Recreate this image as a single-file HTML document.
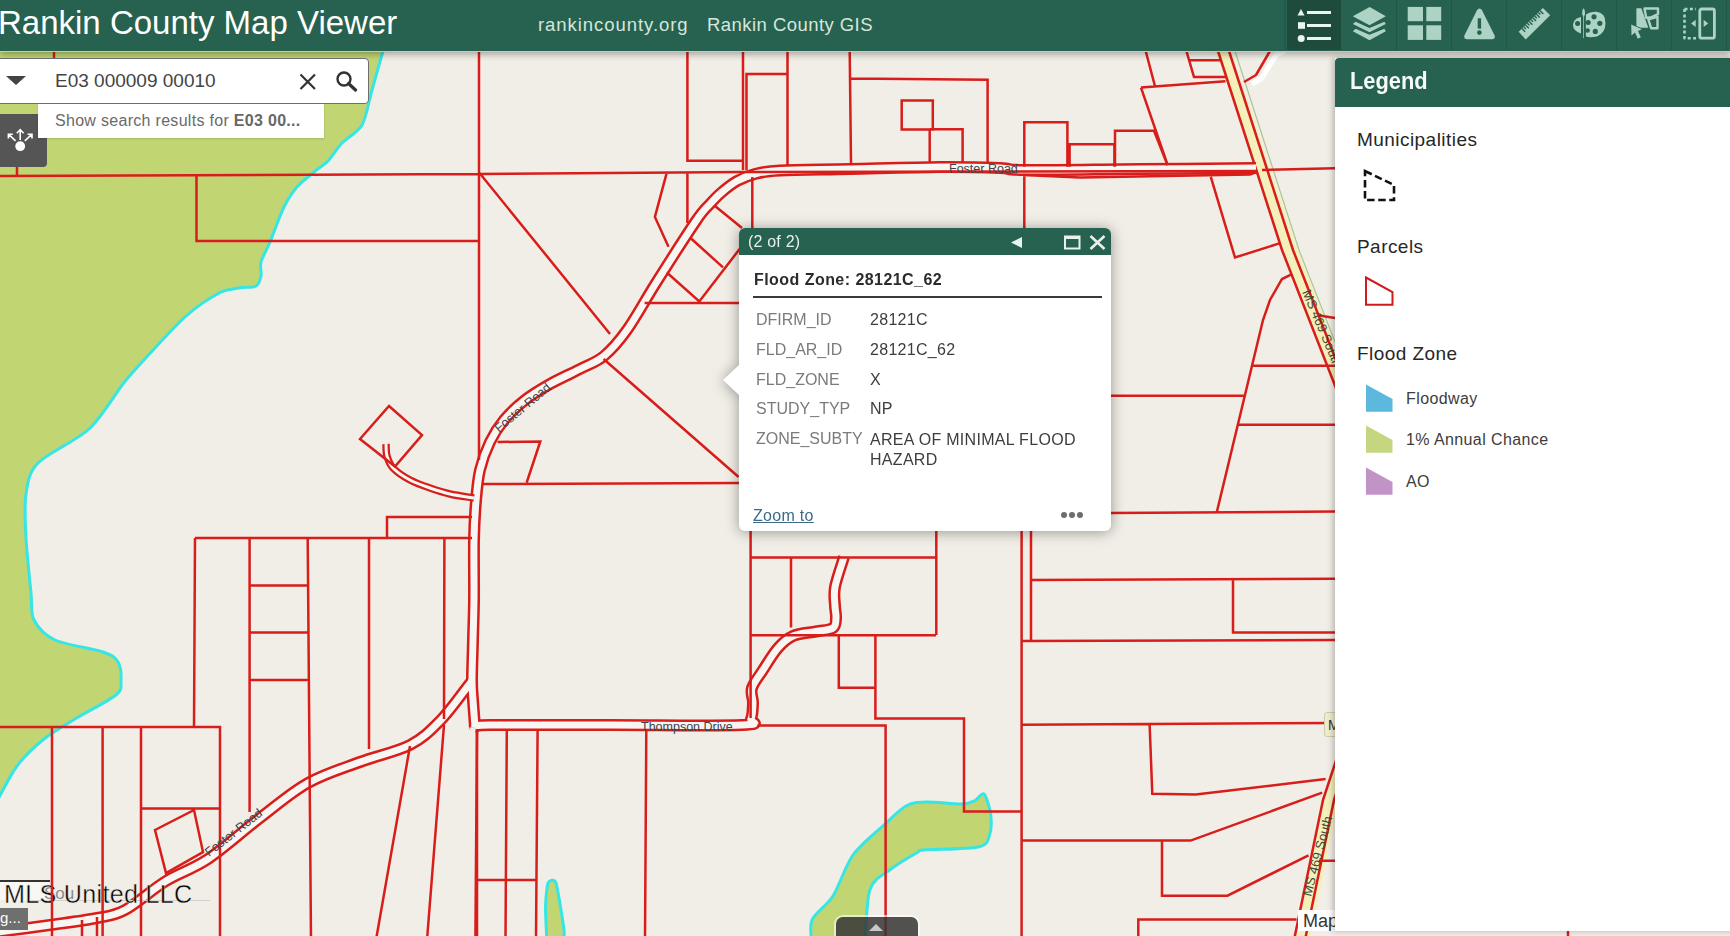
<!DOCTYPE html>
<html><head><meta charset="utf-8">
<style>
*{margin:0;padding:0;box-sizing:border-box}
html,body{width:1730px;height:936px;overflow:hidden;background:#F1EEE7;font-family:"Liberation Sans",sans-serif;position:relative}
#map{position:absolute;left:0;top:0;width:1730px;height:936px}
#hdr{position:absolute;left:0;top:0;width:1730px;height:52px;background:#26624F;border-bottom:1px solid #b9cfc5;box-shadow:0 3px 6px rgba(0,0,0,.28)}
#title{position:absolute;left:-2px;top:4px;font-size:33px;color:#fff;white-space:nowrap;letter-spacing:0}
.lnk{position:absolute;top:14px;font-size:18.5px;color:#d6e6dd;white-space:nowrap}
.tb{position:absolute;top:0;width:55px;height:50px;border-left:1px solid #215847}
.tb svg{position:absolute;left:11px;top:7px}
#legend{position:absolute;left:1335px;top:58px;width:400px;height:873px;background:#fff;box-shadow:-2px 0 6px rgba(0,0,0,.25)}
#lhd{position:absolute;left:0;top:0;width:100%;height:49px;background:#26624F;border-top-left-radius:4px}
#lhd span{position:absolute;left:15px;top:10px;font-size:23.5px;font-weight:bold;color:#f4fbf8;letter-spacing:0;transform:scaleX(0.93);transform-origin:0 0}
.lh{position:absolute;left:22px;font-size:19px;letter-spacing:0.45px;color:#262626;white-space:nowrap}
.li{position:absolute;left:71px;margin-top:1px;font-size:16px;letter-spacing:0.4px;color:#3c3c3c;white-space:nowrap}
#search{position:absolute;left:-1px;top:58px;width:370px;height:46px;background:#fff;border:1px solid #6e6e6e;border-radius:0 4px 4px 0}
#sugg{position:absolute;left:38px;top:104px;width:286px;height:34px;background:#fff;box-shadow:0 1px 2px rgba(0,0,0,.15)}
#sugg span{position:absolute;left:17px;top:8px;font-size:16px;color:#6a6a6a;white-space:nowrap;letter-spacing:0.3px}
#navbtn{position:absolute;left:0;top:114px;width:47px;height:53px;background:#555;border-radius:0 0 4px 0}
#popup{position:absolute;left:739px;top:228px;width:372px;height:303px;background:#fff;border-radius:6px;filter:drop-shadow(0 1px 7px rgba(0,0,0,.38))}
#phd{position:absolute;left:0;top:0;width:100%;height:27px;background:#26624F;border-radius:6px 6px 0 0}
#phd span{position:absolute;left:9px;top:5px;letter-spacing:0.2px;font-size:16px;color:#e8f1ec}
#ptitle{position:absolute;left:15px;top:43px;letter-spacing:0.45px;font-size:16px;font-weight:bold;color:#2b2b2b;white-space:nowrap}
#pline{position:absolute;left:14px;top:68px;width:349px;height:2px;background:#3a3a3a}
.pk{position:absolute;left:17px;margin-top:1px;font-size:16px;color:#7b7b7b;white-space:nowrap}
.pv{position:absolute;left:131px;margin-top:1px;letter-spacing:0.3px;font-size:16px;color:#3d3d3d;white-space:nowrap}
#zoomto{position:absolute;left:14px;top:279px;letter-spacing:0.3px;font-size:16px;color:#3c6a88;text-decoration:underline}
</style></head><body>
<svg id="map" width="1730" height="936" viewBox="0 0 1730 936">
<!--MAP-->
<g fill="#C1D573" stroke="none">
<path d="M386.0 40.0 C385.6 41.6 385.1 43.5 383.0 51.0 C380.9 58.5 375.1 78.9 372.0 90.0 C368.9 101.1 366.5 117.0 362.0 125.0 C357.5 132.9 347.1 137.6 342.0 143.0 C336.9 148.4 332.2 156.7 328.0 161.0 C323.8 165.3 318.6 168.1 314.0 172.0 C309.4 175.9 301.5 181.8 297.0 187.0 C292.5 192.2 288.1 198.8 284.0 207.0 C279.9 215.2 273.4 233.8 270.0 242.0 C266.6 250.2 262.4 256.9 261.0 262.0 C259.6 267.1 261.8 272.4 261.0 276.0 C260.2 279.6 259.3 284.2 256.0 286.0 C252.7 287.8 244.6 286.9 239.0 288.0 C233.4 289.1 227.1 288.6 219.0 293.0 C210.9 297.4 196.2 306.9 185.0 317.0 C173.8 327.1 153.3 349.9 144.0 360.0 C134.7 370.1 131.2 373.6 123.0 384.0 C114.8 394.4 101.8 417.1 89.0 429.0 C76.2 440.9 47.5 453.2 38.0 463.0 C28.5 472.8 27.8 482.8 26.0 494.0 C24.2 505.2 25.2 523.1 26.0 538.0 C26.8 552.9 29.8 580.7 31.0 593.0 C32.2 605.3 30.4 613.0 34.0 620.0 C37.6 627.0 44.6 635.2 55.0 640.0 C65.3 644.8 93.5 648.7 103.0 652.0 C112.5 655.3 115.3 657.6 118.0 662.0 C120.7 666.4 121.3 676.0 121.0 681.0 C120.7 686.0 122.9 689.3 116.0 695.0 C109.1 700.7 85.8 712.4 75.0 719.0 C64.2 725.6 52.7 732.0 44.0 739.0 C35.3 746.0 24.4 756.1 17.0 766.0 C9.7 775.9 -1.7 799.1 -5.0 805.0 L-5 40 Z"/>
<path d="M547.0 945.0 C546.9 941.2 545.4 913.2 545.5 907.0 C545.6 900.8 547.0 885.4 548.0 883.0 C549.0 880.6 554.4 878.3 556.0 883.0 C557.6 887.7 563.3 923.8 564.0 930.0 C564.7 936.2 563.1 943.5 563.0 945.0 Z"/>
<path d="M812.0 945.0 C812.0 941.2 808.9 927.4 812.0 920.0 C815.1 912.6 826.9 905.8 833.0 896.0 C839.1 886.2 845.4 865.6 853.0 855.0 C860.6 844.4 876.0 832.4 884.0 825.0 C892.0 817.6 899.7 809.5 906.0 806.0 C912.3 802.5 917.7 802.3 926.0 802.0 C934.3 801.7 954.1 804.2 961.5 804.0 C968.9 803.8 971.6 802.1 975.0 800.6 C978.4 799.1 981.7 792.0 984.0 794.0 C986.3 796.0 989.8 807.9 990.6 814.0 C991.4 820.1 991.4 830.0 989.6 835.0 C987.8 840.0 988.4 844.8 978.6 847.0 C968.8 849.2 933.1 849.2 924.0 850.0 C914.9 850.8 923.0 849.1 918.0 852.0 C913.0 854.9 898.2 863.4 891.0 869.0 C883.8 874.6 873.9 878.1 870.0 889.5 C866.1 900.9 865.8 936.7 865.0 945.0 Z"/>
</g>
<g fill="none" stroke="#36E6E4" stroke-width="3" stroke-linejoin="round">
<path d="M386.0 40.0 C385.6 41.6 385.1 43.5 383.0 51.0 C380.9 58.5 375.1 78.9 372.0 90.0 C368.9 101.1 366.5 117.0 362.0 125.0 C357.5 132.9 347.1 137.6 342.0 143.0 C336.9 148.4 332.2 156.7 328.0 161.0 C323.8 165.3 318.6 168.1 314.0 172.0 C309.4 175.9 301.5 181.8 297.0 187.0 C292.5 192.2 288.1 198.8 284.0 207.0 C279.9 215.2 273.4 233.8 270.0 242.0 C266.6 250.2 262.4 256.9 261.0 262.0 C259.6 267.1 261.8 272.4 261.0 276.0 C260.2 279.6 259.3 284.2 256.0 286.0 C252.7 287.8 244.6 286.9 239.0 288.0 C233.4 289.1 227.1 288.6 219.0 293.0 C210.9 297.4 196.2 306.9 185.0 317.0 C173.8 327.1 153.3 349.9 144.0 360.0 C134.7 370.1 131.2 373.6 123.0 384.0 C114.8 394.4 101.8 417.1 89.0 429.0 C76.2 440.9 47.5 453.2 38.0 463.0 C28.5 472.8 27.8 482.8 26.0 494.0 C24.2 505.2 25.2 523.1 26.0 538.0 C26.8 552.9 29.8 580.7 31.0 593.0 C32.2 605.3 30.4 613.0 34.0 620.0 C37.6 627.0 44.6 635.2 55.0 640.0 C65.3 644.8 93.5 648.7 103.0 652.0 C112.5 655.3 115.3 657.6 118.0 662.0 C120.7 666.4 121.3 676.0 121.0 681.0 C120.7 686.0 122.9 689.3 116.0 695.0 C109.1 700.7 85.8 712.4 75.0 719.0 C64.2 725.6 52.7 732.0 44.0 739.0 C35.3 746.0 24.4 756.1 17.0 766.0 C9.7 775.9 -1.7 799.1 -5.0 805.0"/>
<path d="M547.0 945.0 C546.9 941.2 545.4 913.2 545.5 907.0 C545.6 900.8 547.0 885.4 548.0 883.0 C549.0 880.6 554.4 878.3 556.0 883.0 C557.6 887.7 563.3 923.8 564.0 930.0 C564.7 936.2 563.1 943.5 563.0 945.0"/>
<path d="M812.0 945.0 C812.0 941.2 808.9 927.4 812.0 920.0 C815.1 912.6 826.9 905.8 833.0 896.0 C839.1 886.2 845.4 865.6 853.0 855.0 C860.6 844.4 876.0 832.4 884.0 825.0 C892.0 817.6 899.7 809.5 906.0 806.0 C912.3 802.5 917.7 802.3 926.0 802.0 C934.3 801.7 954.1 804.2 961.5 804.0 C968.9 803.8 971.6 802.1 975.0 800.6 C978.4 799.1 981.7 792.0 984.0 794.0 C986.3 796.0 989.8 807.9 990.6 814.0 C991.4 820.1 991.4 830.0 989.6 835.0 C987.8 840.0 988.4 844.8 978.6 847.0 C968.8 849.2 933.1 849.2 924.0 850.0 C914.9 850.8 923.0 849.1 918.0 852.0 C913.0 854.9 898.2 863.4 891.0 869.0 C883.8 874.6 873.9 878.1 870.0 889.5 C866.1 900.9 865.8 936.7 865.0 945.0"/>
</g>
<!-- highway -->
<g fill="none" stroke-linejoin="round">
<path d="M1212 30 L1226 59 L1290 250 L1342 383 L1370 450" stroke="#F3F0BC" stroke-width="14"/>
<path d="M1235 51 L1299 250 L1348 375 L1375 450" stroke="#a8c890" stroke-width="1.2"/>
<path d="M1211 30 L1218 51 L1282 250 L1334 383 L1360 450" stroke="#D81D1A" stroke-width="2.5"/>
<path d="M1222 30 L1229 51 L1293 250 L1345 383 L1371 450" stroke="#D81D1A" stroke-width="2.5"/>
<path d="M1364 700 L1331 800 L1301 945" stroke="#F3F0BC" stroke-width="15"/>
<path d="M1356 700 L1323 800 L1293 945" stroke="#D81D1A" stroke-width="2.5"/>
<path d="M1367 700 L1334 800 L1304 945" stroke="#D81D1A" stroke-width="2.5"/>
</g>
<!-- roads -->
<g fill="none" stroke-linejoin="round" stroke-linecap="butt">
<g stroke="#D81D1A" stroke-width="12">
<path d="M475.0 727.0 C474.7 722.5 473.5 707.8 473.0 700.0 C472.5 692.2 472.0 690.0 472.0 680.0 C472.0 670.0 472.7 653.3 473.0 640.0 C473.3 626.7 473.8 616.7 474.0 600.0 C474.2 583.3 473.7 556.5 474.0 540.0 C474.3 523.5 475.0 512.7 476.0 501.0 C477.0 489.3 477.7 479.8 480.0 470.0 C482.3 460.2 486.0 450.3 490.0 442.0 C494.0 433.7 498.2 427.0 504.0 420.0 C509.8 413.0 517.3 406.0 525.0 400.0 C532.7 394.0 540.8 389.2 550.0 384.0 C559.2 378.8 571.0 373.7 580.0 369.0 C589.0 364.3 596.2 362.5 604.0 356.0 C611.8 349.5 618.3 342.2 627.0 330.0 C635.7 317.8 644.5 301.2 656.0 283.0 C667.5 264.8 687.0 234.2 696.0 221.0 C705.0 207.8 705.7 208.8 710.0 204.0 C714.3 199.2 717.5 195.8 722.0 192.0 C726.5 188.2 731.5 184.0 737.0 181.0 C742.5 178.0 747.8 175.8 755.0 174.0 C762.2 172.2 764.2 171.3 780.0 170.5 C795.8 169.7 823.3 169.6 850.0 169.0 C876.7 168.4 915.0 167.2 940.0 167.0 C965.0 166.8 985.8 167.5 1000.0 168.0 C1014.2 168.5 1001.7 169.8 1025.0 170.0 C1048.3 170.2 1101.5 169.3 1140.0 169.0 C1178.5 168.7 1236.7 168.2 1256.0 168.0"/>
<path d="M-10.0 933.0 C0.0 931.7 32.2 927.5 50.0 925.0 C67.8 922.5 84.5 920.5 97.0 918.0 C109.5 915.5 113.5 916.2 125.0 910.0 C136.5 903.8 152.2 889.5 166.0 881.0 C179.8 872.5 192.3 869.5 208.0 859.0 C223.7 848.5 243.3 830.7 260.0 818.0 C276.7 805.3 291.3 792.3 308.0 783.0 C324.7 773.7 343.0 768.3 360.0 762.0 C377.0 755.7 396.7 751.8 410.0 745.0 C423.3 738.2 430.3 730.8 440.0 721.0 C449.7 711.2 462.7 692.8 468.0 686.0 C473.3 679.2 471.3 681.0 472.0 680.0"/>
<path d="M475.0 727.0 C477.5 726.7 467.5 725.3 490.0 725.0 C512.5 724.7 568.0 725.0 610.0 725.0 C652.0 725.0 718.5 726.0 742.0 725.0 C765.5 724.0 749.2 722.7 751.0 719.0 C752.8 715.3 752.8 708.2 753.0 703.0 C753.2 697.8 750.3 693.5 752.0 688.0 C753.7 682.5 758.7 676.7 763.0 670.0 C767.3 663.3 773.0 653.7 778.0 648.0 C783.0 642.3 786.7 638.8 793.0 636.0 C799.3 633.2 809.3 632.8 816.0 631.5 C822.7 630.2 829.7 630.2 833.0 628.0 C836.3 625.8 835.7 621.7 836.0 618.0 C836.3 614.3 835.2 611.2 835.0 606.0 C834.8 600.8 833.5 595.2 835.0 587.0 C836.5 578.8 842.5 562.0 844.0 557.0"/>
</g>
<g stroke="#F7F6F2" stroke-width="7">
<path d="M475.0 727.0 C474.7 722.5 473.5 707.8 473.0 700.0 C472.5 692.2 472.0 690.0 472.0 680.0 C472.0 670.0 472.7 653.3 473.0 640.0 C473.3 626.7 473.8 616.7 474.0 600.0 C474.2 583.3 473.7 556.5 474.0 540.0 C474.3 523.5 475.0 512.7 476.0 501.0 C477.0 489.3 477.7 479.8 480.0 470.0 C482.3 460.2 486.0 450.3 490.0 442.0 C494.0 433.7 498.2 427.0 504.0 420.0 C509.8 413.0 517.3 406.0 525.0 400.0 C532.7 394.0 540.8 389.2 550.0 384.0 C559.2 378.8 571.0 373.7 580.0 369.0 C589.0 364.3 596.2 362.5 604.0 356.0 C611.8 349.5 618.3 342.2 627.0 330.0 C635.7 317.8 644.5 301.2 656.0 283.0 C667.5 264.8 687.0 234.2 696.0 221.0 C705.0 207.8 705.7 208.8 710.0 204.0 C714.3 199.2 717.5 195.8 722.0 192.0 C726.5 188.2 731.5 184.0 737.0 181.0 C742.5 178.0 747.8 175.8 755.0 174.0 C762.2 172.2 764.2 171.3 780.0 170.5 C795.8 169.7 823.3 169.6 850.0 169.0 C876.7 168.4 915.0 167.2 940.0 167.0 C965.0 166.8 985.8 167.5 1000.0 168.0 C1014.2 168.5 1001.7 169.8 1025.0 170.0 C1048.3 170.2 1101.5 169.3 1140.0 169.0 C1178.5 168.7 1236.7 168.2 1256.0 168.0"/>
<path d="M-10.0 933.0 C0.0 931.7 32.2 927.5 50.0 925.0 C67.8 922.5 84.5 920.5 97.0 918.0 C109.5 915.5 113.5 916.2 125.0 910.0 C136.5 903.8 152.2 889.5 166.0 881.0 C179.8 872.5 192.3 869.5 208.0 859.0 C223.7 848.5 243.3 830.7 260.0 818.0 C276.7 805.3 291.3 792.3 308.0 783.0 C324.7 773.7 343.0 768.3 360.0 762.0 C377.0 755.7 396.7 751.8 410.0 745.0 C423.3 738.2 430.3 730.8 440.0 721.0 C449.7 711.2 462.7 692.8 468.0 686.0 C473.3 679.2 471.3 681.0 472.0 680.0"/>
<path d="M475.0 727.0 C477.5 726.7 467.5 725.3 490.0 725.0 C512.5 724.7 568.0 725.0 610.0 725.0 C652.0 725.0 718.5 726.0 742.0 725.0 C765.5 724.0 749.2 722.7 751.0 719.0 C752.8 715.3 752.8 708.2 753.0 703.0 C753.2 697.8 750.3 693.5 752.0 688.0 C753.7 682.5 758.7 676.7 763.0 670.0 C767.3 663.3 773.0 653.7 778.0 648.0 C783.0 642.3 786.7 638.8 793.0 636.0 C799.3 633.2 809.3 632.8 816.0 631.5 C822.7 630.2 829.7 630.2 833.0 628.0 C836.3 625.8 835.7 621.7 836.0 618.0 C836.3 614.3 835.2 611.2 835.0 606.0 C834.8 600.8 833.5 595.2 835.0 587.0 C836.5 578.8 842.5 562.0 844.0 557.0"/>
</g>
<path d="M386.0 444.0 C386.2 446.0 385.8 452.0 387.0 456.0 C388.2 460.0 389.2 464.0 393.0 468.0 C396.8 472.0 403.8 476.7 410.0 480.0 C416.2 483.3 423.3 485.7 430.0 488.0 C436.7 490.3 442.7 492.3 450.0 494.0 C457.3 495.7 470.0 497.3 474.0 498.0" stroke="#D81D1A" stroke-width="7.5"/>
<path d="M386.0 444.0 C386.2 446.0 385.8 452.0 387.0 456.0 C388.2 460.0 389.2 464.0 393.0 468.0 C396.8 472.0 403.8 476.7 410.0 480.0 C416.2 483.3 423.3 485.7 430.0 488.0 C436.7 490.3 442.7 492.3 450.0 494.0 C457.3 495.7 470.0 497.3 474.0 498.0" stroke="#F7F6F2" stroke-width="3"/>
<path d="M1244 82 L1256 75 L1270 51" stroke="#D81D1A" stroke-width="2.5"/>
<path d="M1252 84 L1262 78 L1276 55 L1285 51" stroke="#fff" stroke-width="5"/>
</g>
<!-- roads end -->
<!-- mls label -->
<rect x="-2" y="880" width="52" height="20" fill="#f8f7f3"/>
<path d="M0 881H50" stroke="#333" stroke-width="2"/>
<path d="M30 900.5H210" stroke="#cfcfcf" stroke-width="1"/>
<text x="44" y="899" font-family="Liberation Sans, sans-serif" font-size="17" fill="#8a8a8a">Sou</text>
<text transform="translate(4,903) scale(0.95,1)" font-family="Liberation Sans, sans-serif" font-size="26.5" letter-spacing="0.3" fill="#000" stroke="#F1EEE7" stroke-width="0.45" paint-order="normal">MLS United LLC</text>
<!-- parcels -->
<g fill="none" stroke="#D81D1A" stroke-width="2.5">
<path d="M54 51 V58 M17 166 V176 M0 176 L480 174 M196.5 176 L196.5 241 L480 241 M479 51 L479 460"/>
<path d="M389 406 L422 435 L395 466.5 L360 439 Z M387 538 L387 517 L472 517 M195 538 L472 538 M195 538 L194 727 M249.6 538 L249.6 812 M307.7 538 L311 940 M369 538 L369 749 M444.4 538 L444 719 M249.6 585.5 H307.7 M249.6 632.6 H307.7 M249.6 680 H307.7"/>
<path d="M0 727 L220 727 L220 940 M52 727 V940 M102.6 727 V940 M141 727 V940 M141 808.5 H220 M155 830 L194 810 L203 852 L166 873 Z M410 746 L376 940 M444 725 L427 940 M477 729 V940 M82 920 V940 M97 917 V940"/>
<path d="M480 174 L744 172 L1256 171 M479.5 173 L610 334 M687.4 51 V160.7 H743 M743 51 V170 M746.5 170 V74 H787.5 M787.5 51 V165 M849.7 51 L851 163 M849.7 78.6 L987.6 79.7 V162 M901.7 100.5 H932.8 V129.6 H901.7 Z M929.7 129.2 H962.6 V162 M929.7 129.6 V162 M666.8 172.6 L654.9 217 L668.5 246.8 M687.4 173 V223 M752.3 177 V228 M714.7 205.8 L742 228 M690.8 238.3 L723 267.4 M666.8 272.5 L699.3 301.5 L740 248.5 M644.6 303 H740"/>
<path d="M603.6 359 L738.6 477 M482 484 L739 483 M497.6 442 L540.3 441.5 L526.7 482.5"/>
<path d="M1024.3 166.8 V122.3 H1067.4 V166.8 M1069.6 166.8 V144.2 H1114.4 V166.8 M1115 166.8 V130.8 H1154 L1167.6 165.2 M1141 87.6 L1225.5 81.3 M1141 87.6 L1167.6 165 M1145.7 51 L1155 86.3 M1186.4 51 L1194 77 H1227 M1188 60.3 H1220.8 M1262 170 L1335 168.3 M1024.3 176 V228 M1210.8 176.8 L1235 257.5 L1279.3 243.4 M1023 175 L1080 177.6 L1250 174.6 L1258 171.5"/>
<path d="M1291 274.7 L1282 279 L1270 300 L1263 320 L1216.6 513 M1319.4 315.4 L1335 318 M1252.6 365.8 H1335 M1238.5 424.7 H1335 M1110 395.8 H1243.8 M1110 513 L1335 511.5 M1021.6 530 V940 M1031 530 V641 M1031 580 L1335 578.8 M1233 580 V632.4 H1335 M1021 641 L1335 640 M936.3 530 V635"/>
<path d="M750.6 530 V718 M750 557.4 H936 M750 635.3 H936 M791 557 V627.4 M838.8 635 V687.8 H875.4 M875.4 635 V718.6 H964 V811.6 H1021 M757.4 725.4 H885.6 V940 M477 731 L475.4 940 M506.8 731 L505.5 940 M537.6 731 L536 940 M646.3 731 L645 940 M477 880 H537"/>
<path d="M1021 724.7 L1149.6 724 L1335 723 M1149.6 724 L1152.3 793.8 L1195.7 794.5 L1325.6 779 M1021 840.6 H1190.6 L1322.2 792.7 M1162 840.6 V895.7 H1227.5 L1308.5 855.3 M1318.8 860.8 H1335 M1138.3 940 V919.6 H1296.6 M1568 925 V940"/>
</g>
<!-- labels -->
<g font-family="Liberation Sans, sans-serif" font-size="12.5" fill="#42424a">
<text x="949" y="173" letter-spacing="0">Foster Road</text>
<text x="641" y="731" letter-spacing="0">Thompson Drive</text>
<text transform="translate(499,433) rotate(-40)">Foster Road</text>
<text transform="translate(209,857) rotate(-38)">Foster Road</text>
<text transform="translate(1302,292) rotate(67)" font-size="13" fill="#3d4a35">MS 469 South</text>
<text transform="translate(1311,897) rotate(-75)" font-size="13" fill="#3d4a35">MS 469 South</text>
</g>
</svg>

<div id="hdr">
  <div id="title">Rankin County Map Viewer</div>
  <div class="lnk" style="left:538px;letter-spacing:0.95px">rankincounty.org</div>
  <div class="lnk" style="left:707px;letter-spacing:0.45px">Rankin County GIS</div>
  <!--TOOLBAR-->
  <div style="position:absolute;left:1287px;top:0;width:54px;height:50px;background:#1F4B3D"></div>
  <div style="position:absolute;left:1284px;top:0;width:2px;height:50px;background:#22594a"></div>
  <div style="position:absolute;left:1396px;top:0;width:1px;height:50px;background:#1f5646"></div>
  <div style="position:absolute;left:1451px;top:0;width:1px;height:50px;background:#1f5646"></div>
  <div style="position:absolute;left:1506px;top:0;width:1px;height:50px;background:#1f5646"></div>
  <div style="position:absolute;left:1561px;top:0;width:1px;height:50px;background:#1f5646"></div>
  <div style="position:absolute;left:1616px;top:0;width:1px;height:50px;background:#1f5646"></div>
  <div style="position:absolute;left:1671px;top:0;width:1px;height:50px;background:#1f5646"></div>
  <div style="position:absolute;left:1726px;top:0;width:1px;height:50px;background:#1f5646"></div>
  <svg style="position:absolute;left:1280px;top:0" width="450" height="50" viewBox="1280 0 450 50">
    <g fill="#EAF4F0">
      <path d="M1301 9L1304.5 15.6H1297.5Z"/>
      <rect x="1307" y="11" width="24" height="3"/>
      <rect x="1298" y="22.2" width="7" height="6.6"/>
      <rect x="1307" y="24" width="24" height="3"/>
      <circle cx="1301.2" cy="38.5" r="3.5"/>
      <rect x="1307" y="37" width="24" height="3"/>
    </g>
    <g fill="#ADD3C5">
      <path d="M1369.7 7L1385.8 16.3L1369.5 25.2L1352.8 16.3Z"/>
      <path d="M1355.6 21.8L1369.5 27.9L1384.4 21.8L1385.8 23.9L1369.5 32.3L1352.8 23.9Z"/>
      <path d="M1355.6 28.8L1369.5 34.8L1384.4 28.8L1385.8 31.2L1369.5 40.2L1352.8 31.2Z"/>
      <rect x="1407.7" y="6.9" width="15.3" height="14.3"/>
      <rect x="1426.3" y="6.9" width="14.9" height="14.3"/>
      <rect x="1407.7" y="25.3" width="15.3" height="14.6"/>
      <rect x="1426.3" y="25.3" width="14.9" height="14.6"/>
      <path d="M1479.5 8.5Q1481 8.5 1482 10.2L1494.6 35.5Q1495.6 39 1492 39.2H1467Q1463.5 39 1464.4 35.5L1477 10.2Q1478 8.5 1479.5 8.5Z"/>
      <path d="M1518.7 31.8L1542.9 7.9L1550.2 15.3L1525.7 39.4Z"/>
      <path d="M1581 17Q1573 19 1573 25Q1573 31 1581 33.5Z"/><path d="M1585.8 14.5Q1590 11.5 1596 11.8Q1605.5 12.5 1605.5 23Q1605.5 33 1597 36.5Q1590 38 1585.8 36.5Z"/>
      <path d="M1636.4 8.2H1641.3L1648.3 27.8L1636.4 27.8Z"/>
      <path d="M1631.2 24.4L1641.8 29.3L1638 31L1640.8 37.3L1637.8 38.8L1635 32.5L1631.5 35.6Z" stroke="#26624F" stroke-width="1.6" paint-order="stroke"/>
    </g>
    <g fill="#1F4B3D" transform="translate(1580,0)" opacity="0"></g>
    <g fill="#26624F">
      <rect x="1530" y="18" width="0" height="0"/>
    </g>
    <g fill="#26624F">
      <circle cx="1594" cy="16.8" r="2.6"/>
      <circle cx="1599.8" cy="23.3" r="2.6"/>
      <circle cx="1595.3" cy="31.4" r="2.6"/>
      <circle cx="1588.2" cy="22.6" r="2.5"/>
      <circle cx="1577.6" cy="23.5" r="2.5"/>
      <circle cx="1587.6" cy="30.5" r="2.3"/>
      <path d="M1479.4 18.3V28.6" stroke="#26624F" stroke-width="3.4"/>
      <circle cx="1479.4" cy="32.6" r="2.3"/>
    </g>
    <path d="M1583.6 6.8Q1585.8 9.5 1585.7 13Q1585.5 15.5 1584.6 17V38.8H1582.6V17Q1581.7 15.5 1581.5 13Q1581.4 9.5 1583.6 6.8Z" fill="#ADD3C5" stroke="#26624F" stroke-width="1.3"/>
    <g stroke="#26624F" stroke-width="1.4">
      <path d="M1521.91 28.60l3.25 3.25M1523.73 26.81l2.12 2.12M1525.55 25.02l3.25 3.25M1527.36 23.23l2.12 2.12M1529.18 21.44l3.25 3.25M1531.00 19.65l2.12 2.12M1532.82 17.86l3.25 3.25M1534.64 16.07l2.12 2.12M1536.45 14.28l3.25 3.25M1538.27 12.49l2.12 2.12M1540.09 10.70l3.25 3.25"/>
    </g>
    <g fill="none" stroke="#ADD3C5" stroke-width="2.4" stroke-linejoin="round">
      <path d="M1644.5 8.5H1658V14.2L1650.5 17.5L1646.2 17.8Z"/>
      <path d="M1648.3 19.3L1657.5 16.8V28.3H1651.2Z"/>
      <path d="M1684.5 9V38.2H1696" stroke-dasharray="3 2.4" stroke-width="2.6"/>
      <path d="M1684.5 9H1696" stroke-dasharray="3 2.4" stroke-width="2.6"/>
      <rect x="1699.8" y="9" width="14.6" height="29.2" rx="2" stroke-width="2.8"/>
    </g>
    <g fill="#ADD3C5">
      <path d="M1691.1 23.4L1695.7 19.8V27Z"/>
      <path d="M1703.6 19.8L1708.2 23.4L1703.6 27Z"/>
    </g>
  </svg>
</div>

<div id="search">
  <svg style="position:absolute;left:6px;top:17px" width="21" height="10"><path d="M0 0H20L10 9Z" fill="#444"/></svg>
  <div style="position:absolute;left:55px;top:11px;font-size:19px;color:#444;white-space:nowrap">E03 000009 00010</div>
  <svg style="position:absolute;left:299px;top:14px" width="18" height="18"><path d="M1.5 1.5L16 16M16 1.5L1.5 16" stroke="#333" stroke-width="2.2"/></svg>
  <svg style="position:absolute;left:335px;top:11px" width="24" height="22"><circle cx="9" cy="9" r="6.5" fill="none" stroke="#333" stroke-width="2.4"/><path d="M13.5 13.5L20.5 20" stroke="#333" stroke-width="3.2" stroke-linecap="round"/></svg>
</div>
<div id="navbtn">
  <svg style="position:absolute;left:0;top:0" width="47" height="53" viewBox="0 114 47 53">
    <circle cx="20.2" cy="146.2" r="4.9" fill="#fff"/>
    <path d="M20.2 140V129.8M16.8 133.2L20.2 129.6L23.6 133.2M15.6 140.8L8.6 134.4M8.4 138.6V134.2H12.8M24.8 140.8L31.8 134.4M27.6 134.2H32V138.6" stroke="#fff" stroke-width="1.6" fill="none"/>
  </svg>
</div>
<div id="sugg"><span>Show search results for <b style="color:#676767">E03 00...</b></span></div>


<div id="popup">
  <svg style="position:absolute;left:-16px;top:136px" width="17" height="32"><path d="M17 0L0 16L17 32Z" fill="#fff"/></svg>
  <div id="phd"><span>(2 of 2)</span>
    <svg style="position:absolute;left:272px;top:9px" width="12" height="11"><path d="M11 0V11L0 5.5Z" fill="#e8f1ec"/></svg>
    <svg style="position:absolute;left:325px;top:7px" width="17" height="15"><rect x="1" y="1.5" width="14.5" height="12" fill="none" stroke="#e8f1ec" stroke-width="2"/><rect x="1" y="1" width="14.5" height="3" fill="#e8f1ec"/></svg>
    <svg style="position:absolute;left:350px;top:7px" width="17" height="15"><path d="M1.5 1L15.5 14M15.5 1L1.5 14" stroke="#e8f1ec" stroke-width="2.6"/></svg>
  </div>
  <div id="ptitle">Flood Zone: 28121C_62</div>
  <div id="pline"></div>
  <div class="pk" style="top:82px">DFIRM_ID</div><div class="pv" style="top:82px">28121C</div>
  <div class="pk" style="top:112px">FLD_AR_ID</div><div class="pv" style="top:112px">28121C_62</div>
  <div class="pk" style="top:142px">FLD_ZONE</div><div class="pv" style="top:142px">X</div>
  <div class="pk" style="top:171px">STUDY_TYP</div><div class="pv" style="top:171px">NP</div>
  <div class="pk" style="top:201px">ZONE_SUBTY</div><div class="pv" style="top:201px;line-height:20px">AREA OF MINIMAL FLOOD<br>HAZARD</div>
  <div id="zoomto">Zoom to</div>
  <svg style="position:absolute;left:321px;top:283px" width="24" height="8"><circle cx="4" cy="4" r="3" fill="#6d6d6d"/><circle cx="12" cy="4" r="3" fill="#6d6d6d"/><circle cx="20" cy="4" r="3" fill="#6d6d6d"/></svg>
</div>

<div style="position:absolute;left:1298px;top:910px;width:45px;height:21px;background:#fff"><span style="position:absolute;left:5px;top:1px;font-size:18px;color:#333">Map</span></div>
<div style="position:absolute;left:1324px;top:712px;width:20px;height:25px;background:#efeccf;border:1px solid #cfcbb0;border-radius:3px"><span style="position:absolute;left:3px;top:4px;font-size:14px;color:#333">M</span></div>
<div id="legend">
  <div id="lhd"><span>Legend</span></div>
  <div class="lh" style="top:71px">Municipalities</div>
  <svg style="position:absolute;left:28px;top:110px" width="34" height="34"><path d="M2 3L31 17V32H2Z" fill="none" stroke="#111" stroke-width="2.6" stroke-dasharray="7.5 3.6"/></svg>
  <div class="lh" style="top:178px">Parcels</div>
  <svg style="position:absolute;left:28px;top:218px" width="34" height="32"><path d="M3 1.5L29.5 16V28.7H3Z" fill="none" stroke="#d01b1b" stroke-width="2"/></svg>
  <div class="lh" style="top:285px">Flood Zone</div>
  <svg style="position:absolute;left:28px;top:325px" width="34" height="32"><path d="M3 1.5L29.5 16V28.7H3Z" fill="#5cb8dd"/></svg>
  <div class="li" style="top:331px">Floodway</div>
  <svg style="position:absolute;left:28px;top:366px" width="34" height="32"><path d="M3 1.5L29.5 16V28.7H3Z" fill="#c5d680"/></svg>
  <div class="li" style="top:372px">1% Annual Chance</div>
  <svg style="position:absolute;left:28px;top:408px" width="34" height="32"><path d="M3 1.5L29.5 16V28.7H3Z" fill="#c293c6"/></svg>
  <div class="li" style="top:414px">AO</div>
</div>

<!--BOTTOM-->
<div style="position:absolute;left:0;top:908px;width:28px;height:22px;background:#6f6f6f"><span style="position:absolute;left:0;top:1px;font-size:15px;color:#fff">g...</span></div>
<div style="position:absolute;left:836px;top:917px;width:82px;height:30px;background:rgba(55,55,55,.86);border-radius:7px;box-shadow:0 0 0 2px rgba(255,255,255,.6)">
  <svg style="position:absolute;left:33px;top:6px" width="15" height="9"><path d="M0 8L7 1L14 8Z" fill="#c8c8c8"/></svg>
</div>
</body></html>
